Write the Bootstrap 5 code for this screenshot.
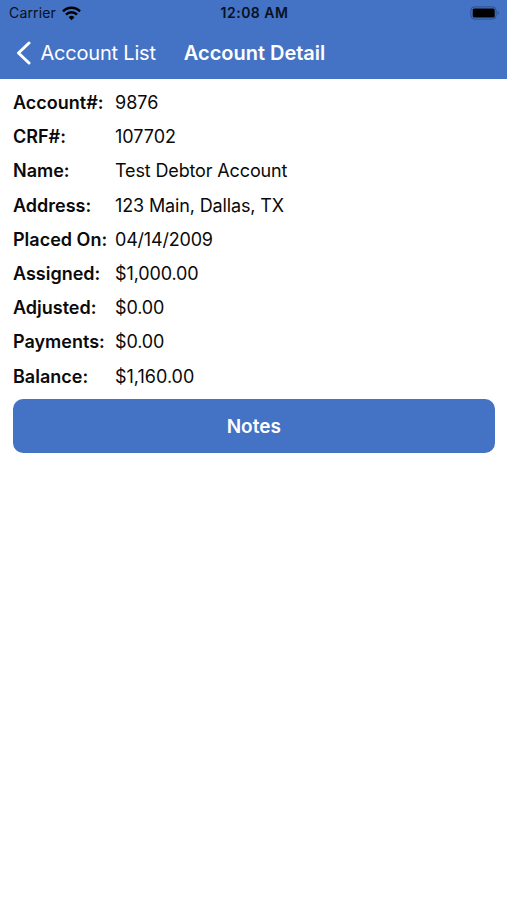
<!DOCTYPE html>
<html lang="en">
<head>
<meta charset="utf-8">
<meta name="viewport" content="width=device-width, initial-scale=1">
<title>Account Detail</title>
<link href="https://cdn.jsdelivr.net/npm/bootstrap@5.3.0/dist/css/bootstrap.min.css" rel="stylesheet">
<style>
body{font-family:Inter,sans-serif;color:#0a0a0a;background:#fff}
.app-head{background:#4472c4;height:79px}
.status{height:26px;font-size:14px;line-height:26px;padding:0 7px 0 9px;display:grid;grid-template-columns:1fr auto 1fr;color:#07101f}
.carrier{letter-spacing:.15px}
.wifi{margin-left:6px}
.clock{letter-spacing:.5px}
.titlebar{height:53px;font-size:20px;line-height:52px;padding-left:16px}
.back{letter-spacing:-.2px;margin-left:9.5px}
.heading{font-weight:600;letter-spacing:-.02px;margin-left:28px}
.fields{padding:7px 13px 0;font-size:18px;grid-template-columns:102px 1fr;display:grid;grid-auto-rows:34.2px;line-height:34.2px;white-space:nowrap}
.fields dt{font-weight:600}
.fields .prose{letter-spacing:-.14px}
.fields .date{letter-spacing:-.2px}
.fields .sum{letter-spacing:-.12px}
.notes-wrap{padding:5.5px 12.5px 0 13px}
.notes,.notes:hover{background:#4472c4;color:#fff;height:53.5px;border-radius:10px;font-size:19px;font-weight:600;padding-top:8px}
</style>
</head>
<body>
<header class="app-head">
<div class="status">
<div class="d-flex align-items-center"><span class="carrier">Carrier</span>
<svg class="wifi" width="19" height="15" viewBox="0 0 19 15" fill="none" stroke="#000" stroke-width="2.5"><path d="M1 5.3a12 12 0 0 1 17 0M4 8.6a7.8 7.8 0 0 1 11 0"/><path d="M6.6 11.3a4.1 4.1 0 0 1 5.8 0L9.5 14.3z" fill="#000" stroke="none"/></svg></div>
<span class="fw-semibold clock">12:08 AM</span>
<div class="d-flex align-items-center justify-content-end"><svg width="30" height="14" viewBox="0 0 30 14"><rect x=".9" y=".9" width="25.2" height="12.2" rx="3.5" fill="none" stroke="#2d4f8c"/><rect x="2.7" y="2.5" width="22" height="9" rx="1.5" fill="#000"/><path d="M27.7 5v4q2.4-2 0-4" fill="#2d4f8c"/></svg></div>
</div>
<div class="titlebar d-flex align-items-center text-white">
<svg width="15" height="24" viewBox="0 0 15 24"><path d="M13 2L2.5 12L13 22" fill="none" stroke="#fff" stroke-width="3" stroke-linecap="round" stroke-linejoin="round"/></svg>
<span class="back">Account List</span><span class="heading">Account Detail</span>
</div>
</header>
<main>
<dl class="fields m-0">
<dt>Account#:</dt><dd class="m-0">9876</dd>
<dt>CRF#:</dt><dd class="m-0">107702</dd>
<dt>Name:</dt><dd class="m-0 prose">Test Debtor Account</dd>
<dt>Address:</dt><dd class="m-0 prose">123 Main, Dallas, TX</dd>
<dt>Placed On:</dt><dd class="m-0 date">04/14/2009</dd>
<dt>Assigned:</dt><dd class="m-0 sum">$1,000.00</dd>
<dt>Adjusted:</dt><dd class="m-0 sum">$0.00</dd>
<dt>Payments:</dt><dd class="m-0 sum">$0.00</dd>
<dt>Balance:</dt><dd class="m-0">$1,160.00</dd>
</dl>
<div class="notes-wrap"><button type="button" class="btn notes w-100 border-0">Notes</button></div>
</main>
<script src="https://cdn.jsdelivr.net/npm/bootstrap@5.3.0/dist/js/bootstrap.bundle.min.js"></script>
</body>
</html>
